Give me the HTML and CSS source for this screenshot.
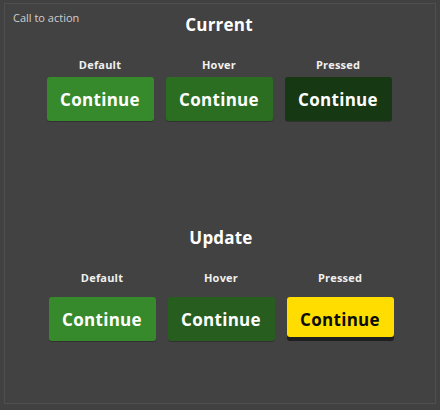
FILE: index.html
```html
<!DOCTYPE html>
<html>
<head>
<meta charset="utf-8">
<link rel="stylesheet" href="styles.css">
</head>
<body>
<div class="frame">
  <div class="frame-label">Call to action</div>
  <section class="section current">
    <h2 class="title">Current</h2>
    <div class="row">
      <div class="col"><div class="state">Default</div><button class="btn g-default">Continue</button></div>
      <div class="col"><div class="state">Hover</div><button class="btn g-hover">Continue</button></div>
      <div class="col"><div class="state">Pressed</div><button class="btn g-pressed">Continue</button></div>
    </div>
  </section>
  <section class="section update">
    <h2 class="title">Update</h2>
    <div class="row">
      <div class="col"><div class="state">Default</div><button class="btn g-default">Continue</button></div>
      <div class="col"><div class="state">Hover</div><button class="btn u-hover">Continue</button></div>
      <div class="col"><div class="state">Pressed</div><button class="btn u-pressed">Continue</button></div>
    </div>
  </section>
</div>
</body>
</html>
```
FILE: styles.css
```css
html, body {
  margin: 0;
  padding: 0;
  background: #414141;
  font-family: "Open Sans", "Noto Sans", sans-serif;
}
.frame {
  position: relative;
  margin: 3px 4px 0 4px;
  width: 430px;
  height: 399px;
  border: 1px solid #4f4f4f;
  background: #424242;
}
.frame-label {
  position: absolute;
  left: 8px;
  top: 7px;
  font-size: 11px;
  line-height: 14px;
  color: #cfcfcf;
}
.section {
  display: flex;
  flex-direction: column;
  align-items: center;
}
.title {
  margin: 0;
  font-size: 17px;
  line-height: 20px;
  font-weight: 700;
  color: #ffffff;
  letter-spacing: 0.2px;
}
.current { padding-top: 11px; margin-left: -2px; }
.update { padding-top: 107px; margin-left: 2px; }
.current .title { margin-bottom: 23px; }
.update .title { margin-bottom: 23px; }
.row {
  display: flex;
  gap: 12px;
}
.col {
  display: flex;
  flex-direction: column;
  align-items: center;
}
.state {
  font-size: 11px;
  line-height: 14px;
  font-weight: 700;
  color: #f0f0f0;
  letter-spacing: 0.2px;
}
.current .state { margin-bottom: 5px; }
.update .state { margin-bottom: 12px; }
.btn {
  width: 107px;
  height: 44px;
  border: none;
  border-radius: 3px;
  font-family: inherit;
  font-size: 17px;
  font-weight: 700;
  letter-spacing: 0.3px;
  color: #ffffff;
  padding: 0;
  box-shadow: 0 1px 0 rgba(0,0,0,0.25);
}
.g-default { background: #378a2b; }
.g-hover { background: #2b6e22; }
.g-pressed { background: #163812; }
.u-hover { background: #275e1f; }
.u-pressed {
  height: 40px;
  margin-bottom: 4px;
  padding-top: 4px;
  background: #ffdd00;
  color: #0b0c0c;
  box-shadow: 0 4px 0 #1f1f1f;
}
```
